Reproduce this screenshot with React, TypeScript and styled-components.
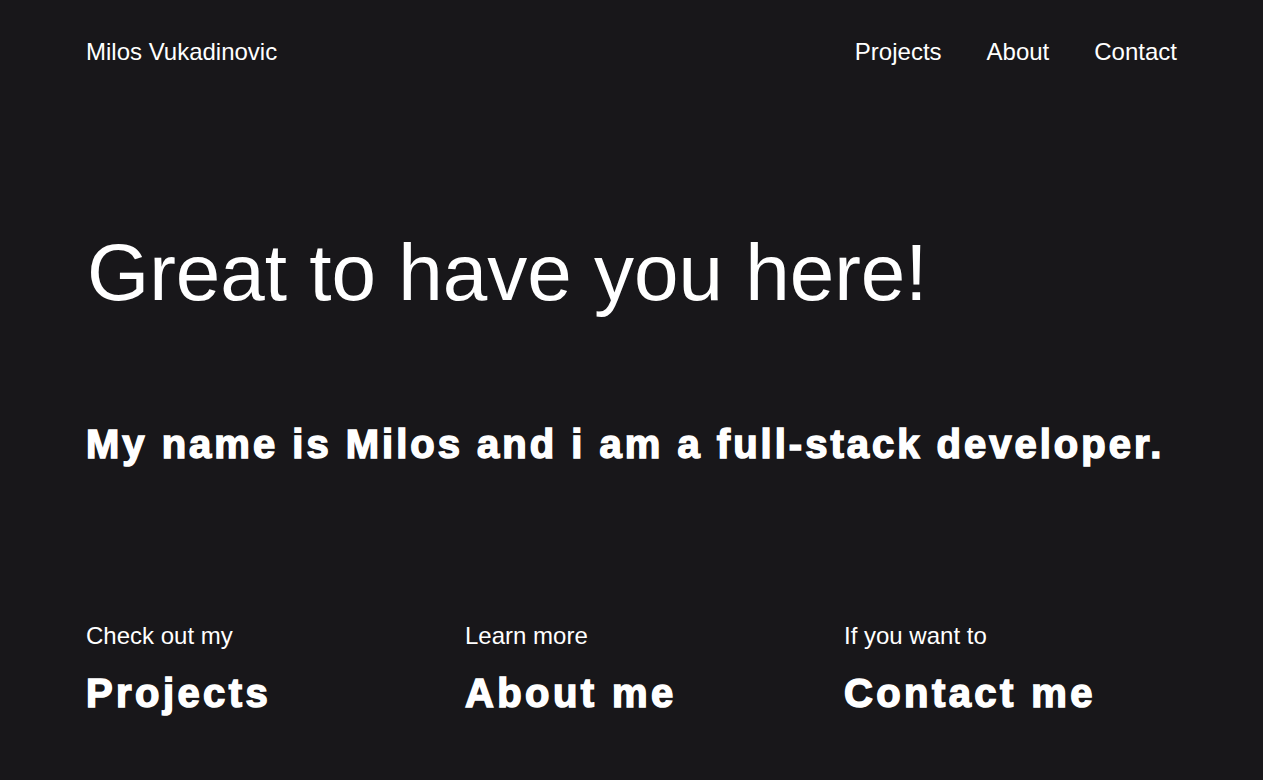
import React from "react";
import styled, { createGlobalStyle } from "styled-components";

const GlobalStyle = createGlobalStyle`
  html, body {
    margin: 0;
    padding: 0;
    background: #18171a;
    color: #ffffff;
    font-family: "Liberation Sans", Arial, sans-serif;
  }
  * { box-sizing: border-box; }
`;

const Page = styled.div`
  min-height: 780px;
  padding: 38px 86px 0;
  display: flex;
  flex-direction: column;
`;

const Header = styled.header`
  display: flex;
  justify-content: space-between;
  align-items: center;
`;

const Brand = styled.a`
  font-size: 24px;
  line-height: 28px;
  color: #fff;
  text-decoration: none;
`;

const Nav = styled.nav`
  display: flex;
  gap: 45px;
`;

const NavLink = styled.a`
  font-size: 24px;
  line-height: 28px;
  color: #fff;
  text-decoration: none;
`;

const Hero = styled.h1`
  margin: 167px 0 0 1px;
  font-size: 80px;
  line-height: 80px;
  font-weight: 400;
  letter-spacing: 0;
`;

const Intro = styled.h2`
  margin: 107px 0 0;
  font-size: 40px;
  line-height: 48px;
  font-weight: 700;
  letter-spacing: 3px;
  -webkit-text-stroke: 1.5px #fff;
`;

const Links = styled.section`
  margin-top: 154px;
  display: grid;
  grid-template-columns: repeat(3, 1fr);
  column-gap: 46px;
`;

const LinkCard = styled.a`
  display: flex;
  flex-direction: column;
  gap: 19px;
  color: #fff;
  text-decoration: none;
`;

const Caption = styled.span`
  font-size: 24px;
  line-height: 28px;
`;

const Title = styled.span`
  font-size: 40px;
  line-height: 48px;
  font-weight: 700;
  letter-spacing: 3.4px;
  -webkit-text-stroke: 1.5px #fff;
`;

const cards = [
  { caption: "Check out my", title: "Projects" },
  { caption: "Learn more", title: "About me" },
  { caption: "If you want to", title: "Contact me" },
];

export default function App() {
  return (
    <>
      <GlobalStyle />
      <Page>
        <Header>
          <Brand href="#">Milos Vukadinovic</Brand>
          <Nav>
            <NavLink href="#">Projects</NavLink>
            <NavLink href="#">About</NavLink>
            <NavLink href="#">Contact</NavLink>
          </Nav>
        </Header>
        <Hero>Great to have you here!</Hero>
        <Intro>My name is Milos and i am a full-stack developer.</Intro>
        <Links>
          {cards.map((c) => (
            <LinkCard href="#" key={c.title}>
              <Caption>{c.caption}</Caption>
              <Title>{c.title}</Title>
            </LinkCard>
          ))}
        </Links>
      </Page>
    </>
  );
}
